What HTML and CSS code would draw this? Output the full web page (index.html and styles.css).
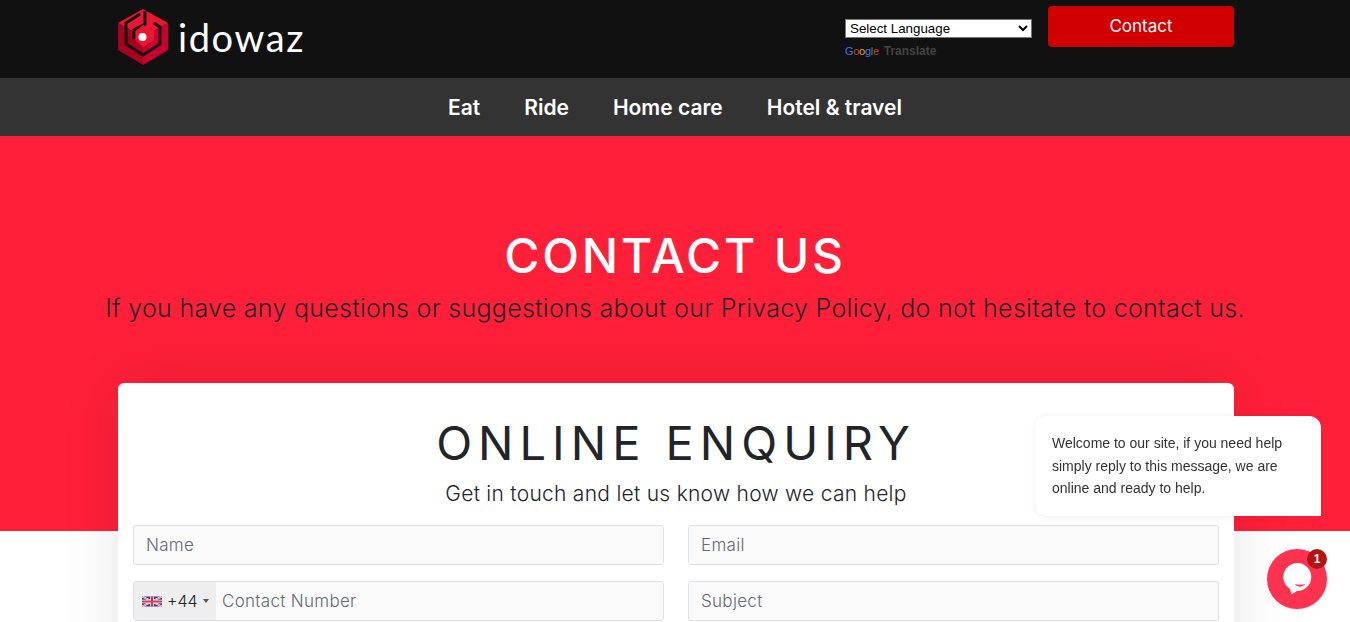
FILE: index.html
```html
<!DOCTYPE html>
<html lang="en">

<head>
    <meta charset="UTF-8">
    <meta name="viewport" content="width=device-width, initial-scale=1.0">
    <title>Contact Us - idowaz</title>
    <link rel="stylesheet" href="styles.css">
</head>

<body>
    <!-- Top Header -->
    <header class="top-bar">
        <div class="container top-inner">
            <a class="logo" href="#">
                <svg class="logo-mark" viewBox="0 0 50 56" width="50" height="56">
                    <polygon points="25,0 50,14 25,28 0,14" fill="#e8162f" />
                    <polygon points="0,14 25,28 25,56 0,41" fill="#a8001f" />
                    <polygon points="50,14 25,28 25,56 50,41" fill="#cc0030" />
                    <polyline points="22,5 8,14 8,35 25,46 42,35 42,18 36,14" fill="none" stroke="#111" stroke-width="3" />
                    <polyline points="27,2 27,15 16,21 16,30" fill="none" stroke="#111" stroke-width="3" />
                    <polygon points="25,16 36,22 36,31 25,38 17.500,31 17.500,22" fill="#e8162f" />
                    <circle cx="24.5" cy="28" r="4" fill="#fff" />
                </svg>
                <span class="logo-text">idowaz</span>
            </a>
            <div class="top-actions">
                <div class="translate">
                    <select class="lang-select">
                        <option>Select Language</option>
                    </select>
                    <div class="powered">
                        <span class="g-word"><span class="g-blue">G</span><span class="g-red">o</span><span class="g-yellow">o</span><span class="g-blue">g</span><span class="g-green">l</span><span class="g-red">e</span></span>
                        <span class="t-word">Translate</span>
                    </div>
                </div>
                <a class="contact-btn" href="#">Contact</a>
            </div>
        </div>
    </header>

    <!-- Main Nav -->
    <nav class="main-nav">
        <a href="#">Eat</a>
        <a href="#">Ride</a>
        <a href="#">Home care</a>
        <a href="#">Hotel &amp; travel</a>
    </nav>

    <!-- Hero -->
    <section class="hero">
        <h1>CONTACT US</h1>
        <p>If you have any questions or suggestions about our Privacy Policy, do not hesitate to contact us.</p>
    </section>

    <!-- Enquiry Form -->
    <div class="container">
        <section class="enquiry-card">
            <h2>ONLINE ENQUIRY</h2>
            <p class="enquiry-sub">Get in touch and let us know how we can help</p>
            <form class="enquiry-form">
                <input type="text" placeholder="Name">
                <input type="text" placeholder="Email">
                <div class="phone-field">
                    <div class="dial-code">
                        <svg class="flag" viewBox="0 0 60 30" width="20" height="11">
                            <rect width="60" height="30" fill="#2a3f8f" />
                            <path d="M0,0 L60,30 M60,0 L0,30" stroke="#fff" stroke-width="6" />
                            <path d="M0,0 L60,30 M60,0 L0,30" stroke="#d8324a" stroke-width="2" />
                            <path d="M30,0 V30 M0,15 H60" stroke="#fff" stroke-width="10" />
                            <path d="M30,0 V30 M0,15 H60" stroke="#d8324a" stroke-width="6" />
                        </svg>
                        <span>+44</span>
                        <i class="caret"></i>
                    </div>
                    <input type="text" placeholder="Contact Number">
                </div>
                <input type="text" placeholder="Subject">
            </form>
        </section>
    </div>

    <!-- Chat Widget -->
    <div class="chat-bubble">Welcome to our site, if you need help simply reply to this message, we are online and ready to help.</div>
    <div class="chat-launcher">
        <svg viewBox="0 0 60 60" width="60" height="60">
            <path d="M30.5,14 A14,14 0 1 1 30,42 L24.500,45.500 L23,40 A14,14 0 0 1 30.500,14 Z" fill="#fff" />
            <path d="M27.500,35 q5.500,1.500 11,0 q-5.500,5.500 -11,0 Z" fill="#ff3350" />
        </svg>
        <span class="chat-badge">1</span>
    </div>
</body>

</html>
```

FILE: styles.css
```css
/* Basic Reset & Variables */
* {
    margin: 0;
    padding: 0;
    box-sizing: border-box;
}

:root {
    --black: #111111;
    --grey: #333333;
    --red: #ff1f38;
    --dark-text: #212529;
}

html,
body {
    height: 100%;
    overflow: hidden;
}

body {
    font-family: 'Inter', sans-serif;
    background: #fff;
    color: var(--dark-text);
}

a {
    text-decoration: none;
}

.container {
    width: 1116px;
    margin: 0 116px 0 118px;
}

/* Top Header */
.top-bar {
    background: var(--black);
    height: 78px;
}

.top-inner {
    display: flex;
    justify-content: space-between;
    align-items: flex-start;
}

.logo {
    display: flex;
    align-items: center;
    gap: 10px;
    margin-top: 9px;
}

.logo-mark {
    display: block;
}

.logo-text {
    font-family: 'Lato', sans-serif;
    font-size: 38px;
    font-weight: 400;
    letter-spacing: 1.6px;
    color: #fff;
}

.top-actions {
    display: flex;
    gap: 16px;
    padding-top: 6px;
}

.translate {
    width: 187px;
    padding-top: 13px;
}

.lang-select {
    display: block;
    width: 187px;
    height: 19px;
    font-family: 'Liberation Sans', sans-serif;
    font-size: 13.33px;
    background: #fff;
    color: #000;
    border: 1px solid #767676;
}

.powered {
    display: flex;
    align-items: center;
    gap: 5px;
    margin-top: 6px;
    font-family: 'Liberation Sans', sans-serif;
    font-weight: 700;
}

.g-word {
    font-size: 11px;
    font-weight: 400;
    letter-spacing: -0.3px;
}

.t-word {
    font-size: 12px;
    color: #444;
}

.g-blue { color: #3b78e7; }
.g-red { color: #d8372b; }
.g-yellow { color: #e8a912; }
.g-green { color: #2f9e4f; }

.contact-btn {
    display: flex;
    align-items: center;
    justify-content: center;
    width: 186px;
    height: 41px;
    padding-bottom: 1px;
    background: #d10000;
    color: #fff;
    border-radius: 4px;
    font-size: 17px;
}

/* Main Nav */
.main-nav {
    display: flex;
    justify-content: center;
    align-items: center;
    gap: 44px;
    height: 58px;
    background: var(--grey);
}

.main-nav a {
    color: #fff;
    font-size: 21px;
    font-weight: 600;
}

/* Hero */
.hero {
    background: var(--red);
    height: 395px;
    padding-top: 89px;
    text-align: center;
}

.hero h1 {
    font-size: 48px;
    font-weight: 500;
    line-height: 62px;
    letter-spacing: 2.8px;
    color: #fff;
}

.hero p {
    font-size: 25px;
    font-weight: 300;
    line-height: 30px;
    letter-spacing: 0.28px;
    margin-top: 6px;
}

/* Enquiry Card */
.enquiry-card {
    position: relative;
    margin-top: -148px;
    height: 520px;
    padding: 25px 15px;
    background: #fff;
    border-radius: 6px;
    box-shadow: 0 0 60px rgba(0, 0, 0, 0.1);
    text-align: center;
}

.enquiry-card h2 {
    font-size: 47px;
    font-weight: 400;
    line-height: 70px;
    letter-spacing: 6px;
}

.enquiry-sub {
    font-size: 21px;
    font-weight: 300;
    line-height: 30px;
    letter-spacing: 0.27px;
    margin-top: 1px;
}

.enquiry-form {
    display: grid;
    grid-template-columns: 531px 531px;
    justify-content: space-between;
    gap: 16px 24px;
    margin-top: 16px;
}

.enquiry-form input {
    width: 100%;
    height: 40px;
    padding: 0 12px 1px;
    font-family: inherit;
    font-size: 17px;
    font-weight: 300;
    letter-spacing: 0.3px;
    background: #fafafa;
    border: 1px solid #dfe0e8;
    border-radius: 3px;
    outline: none;
}

.enquiry-form input::placeholder {
    color: #5f6b78;
    opacity: 1;
}

.phone-field {
    display: flex;
    height: 40px;
    background: #fafafa;
    border: 1px solid #dfe0e8;
    border-radius: 3px;
    overflow: hidden;
}

.dial-code {
    display: flex;
    align-items: center;
    gap: 5px;
    width: 82px;
    flex-shrink: 0;
    padding-left: 8px;
    background: #eeeeee;
    font-size: 16px;
    font-weight: 300;
}

.flag {
    display: block;
}

.caret {
    border-left: 3px solid transparent;
    border-right: 3px solid transparent;
    border-top: 4px solid #555;
}

.phone-field input {
    flex: 1;
    min-width: 0;
    height: 38px;
    padding: 0 6px 1px;
    border: none;
}

/* Chat Widget */
.chat-bubble {
    position: fixed;
    left: 1035px;
    top: 416px;
    width: 286px;
    height: 100px;
    padding: 16px 17px;
    background: #fff;
    border-radius: 12px 12px 0 12px;
    box-shadow: 0 1px 6px rgba(0, 0, 0, 0.08);
    font-family: 'Liberation Sans', sans-serif;
    font-size: 14px;
    line-height: 22.5px;
    color: #333;
}

.chat-launcher {
    position: fixed;
    left: 1267px;
    top: 549px;
    width: 60px;
    height: 60px;
    background: #ff3350;
    border-radius: 50%;
    box-shadow: 0 1px 6px rgba(0, 0, 0, 0.06);
}

.chat-launcher svg {
    display: block;
}

.chat-badge {
    position: absolute;
    top: 0;
    right: 0;
    width: 20px;
    height: 20px;
    line-height: 20px;
    border-radius: 50%;
    background: #b51212;
    color: #fff;
    font-family: 'Liberation Sans', sans-serif;
    font-size: 12px;
    font-weight: 700;
    text-align: center;
}
```
